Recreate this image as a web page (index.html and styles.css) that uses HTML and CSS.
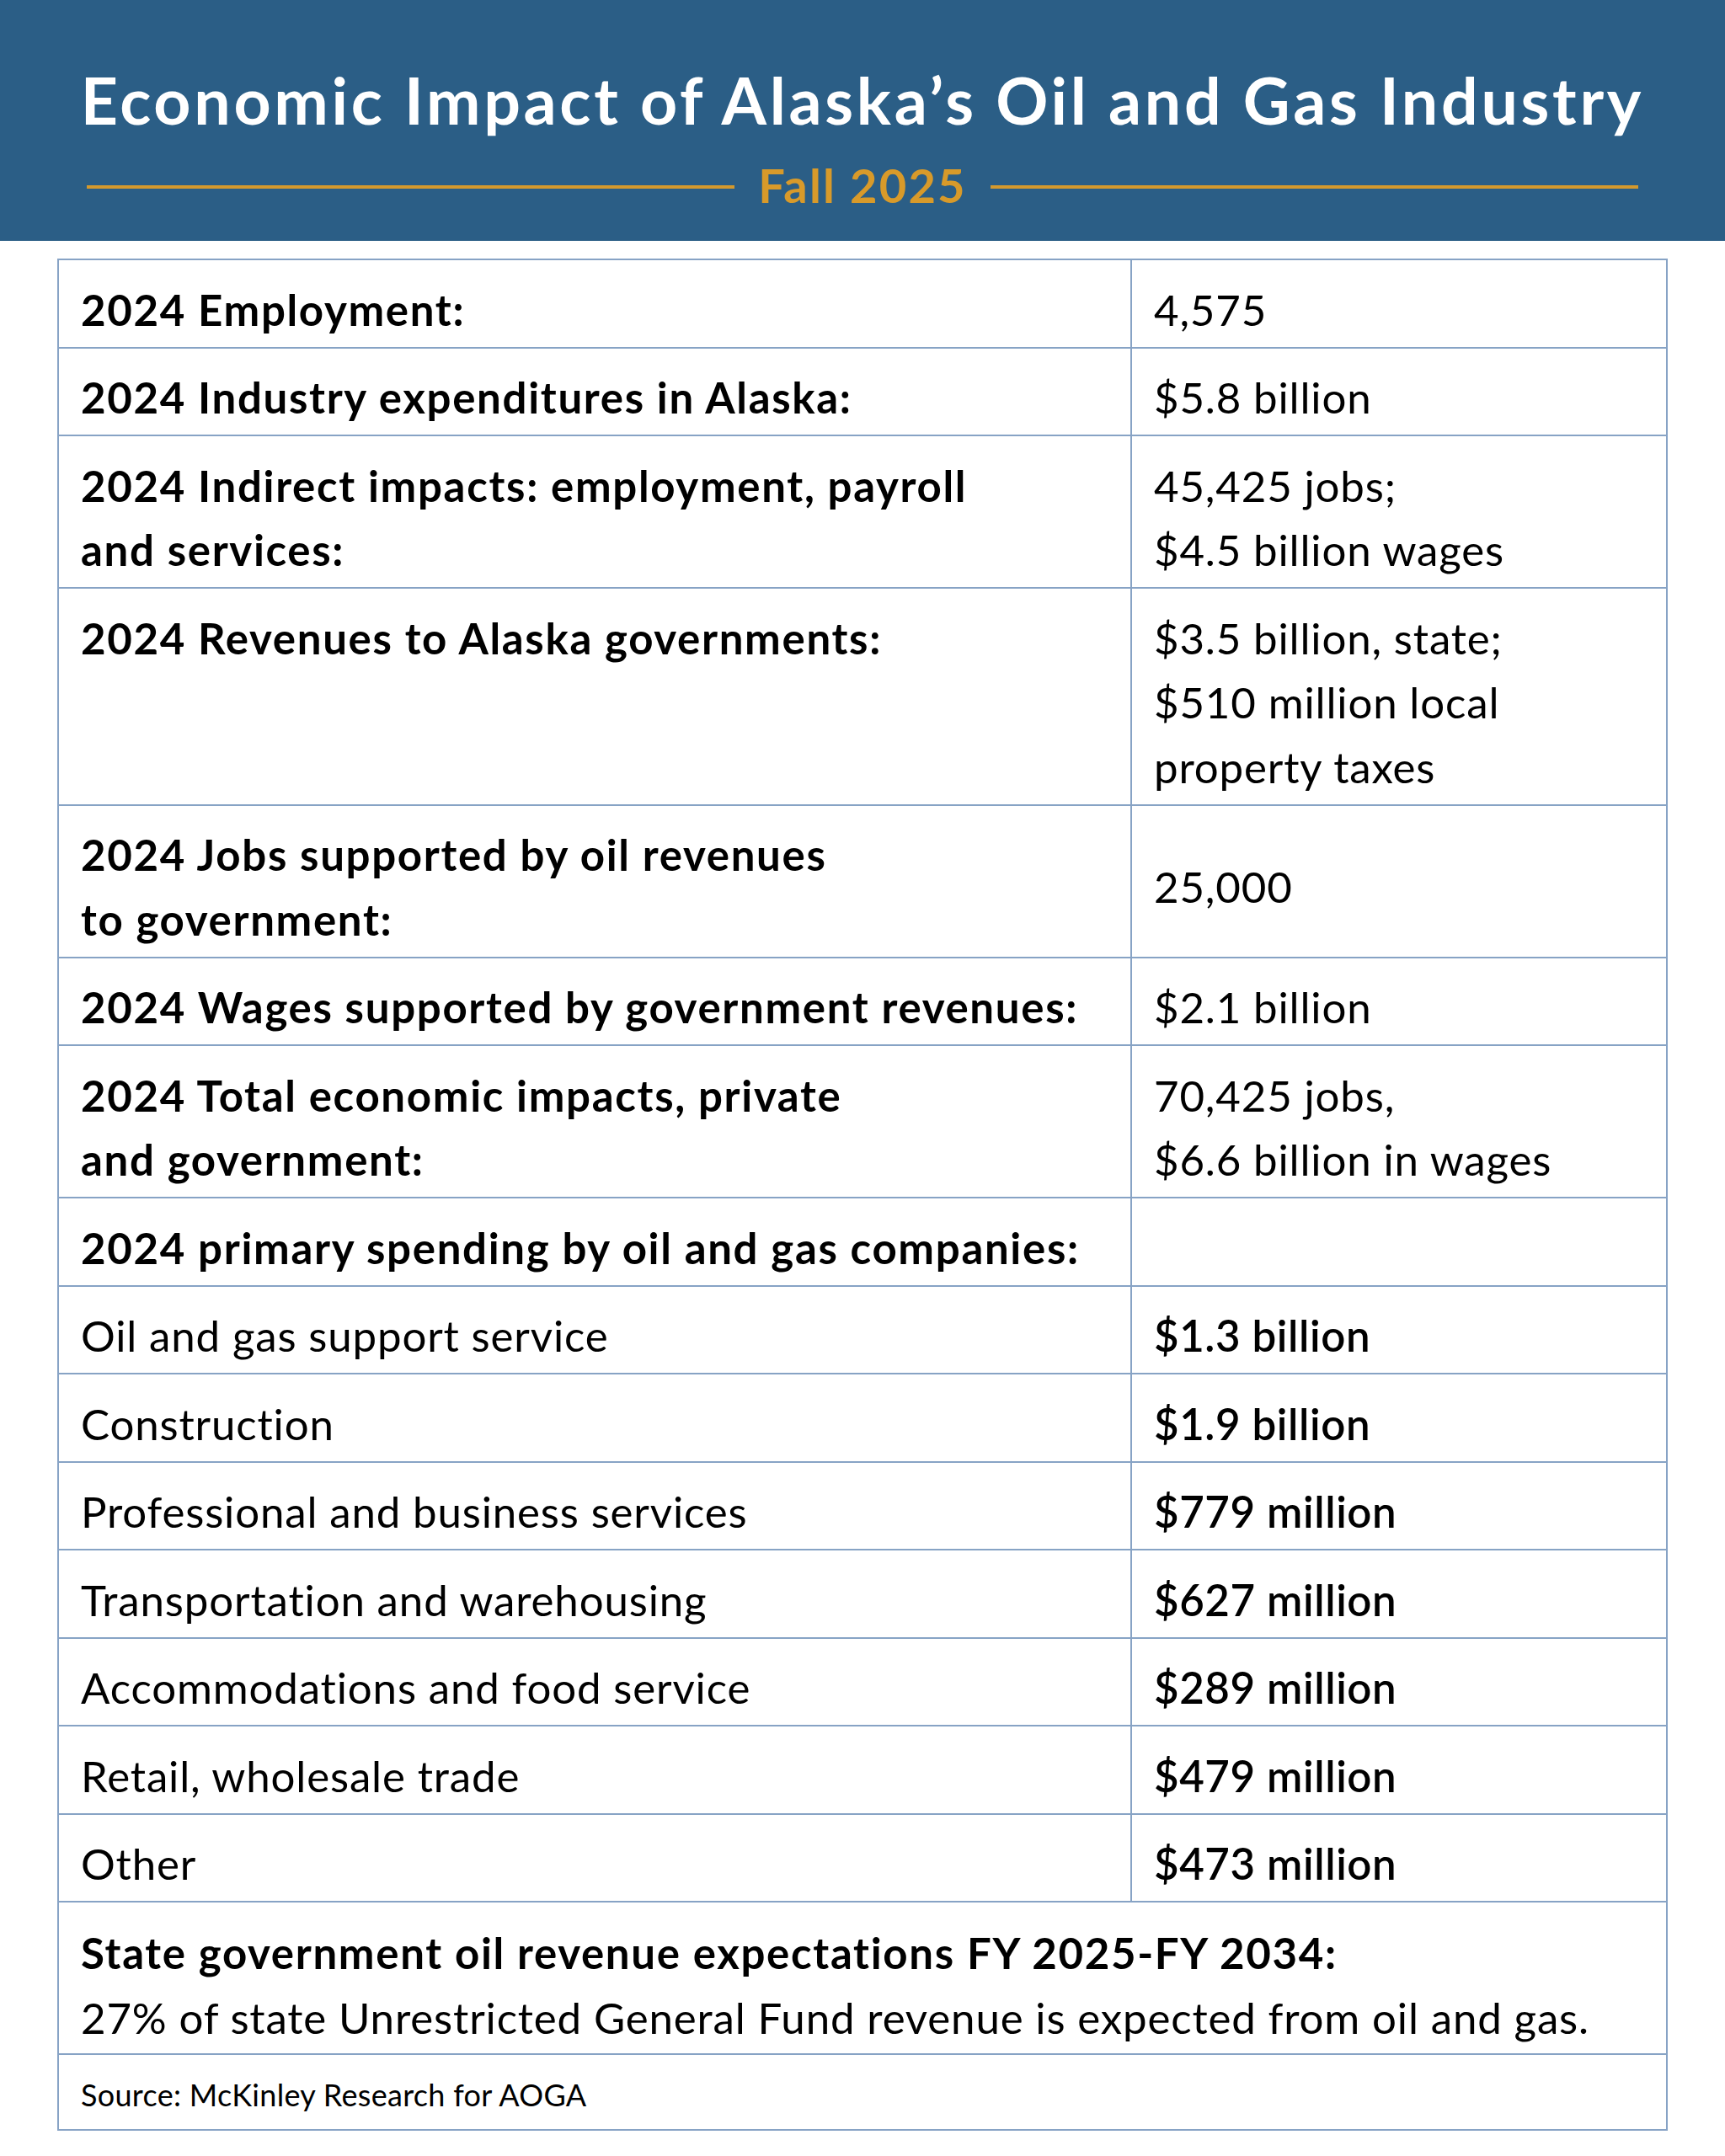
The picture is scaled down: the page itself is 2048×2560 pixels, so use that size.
FILE: index.html
```html
<!DOCTYPE html>
<html lang="en">
<head>
<meta charset="utf-8">
<title>Economic Impact of Alaska’s Oil and Gas Industry</title>
<link rel="stylesheet" href="styles.css">
</head>
<body>
<header class="banner">
  <h1 class="banner-title">Economic Impact of Alaska’s Oil and Gas Industry</h1>
  <div class="banner-sub">
    <span class="rule"></span>
    <span class="sub-text">Fall 2025</span>
    <span class="rule"></span>
  </div>
</header>
<main class="content">
  <table class="facts">
    <colgroup><col class="col-label"><col class="col-value"></colgroup>
    <tbody>
      <tr><th>2024 Employment:</th><td>4,575</td></tr>
      <tr><th>2024 Industry expenditures in Alaska:</th><td>$5.8 billion</td></tr>
      <tr><th>2024 Indirect impacts: employment, payroll<br>and services:</th><td>45,425 jobs;<br>$4.5 billion wages</td></tr>
      <tr><th>2024 Revenues to Alaska governments:</th><td>$3.5 billion, state;<br>$510 million local<br>property taxes</td></tr>
      <tr><th>2024 Jobs supported by oil revenues<br>to government:</th><td class="middle">25,000</td></tr>
      <tr><th>2024 Wages supported by government revenues:</th><td>$2.1 billion</td></tr>
      <tr><th>2024 Total economic impacts, private<br>and government:</th><td>70,425 jobs,<br>$6.6 billion in wages</td></tr>
      <tr><th>2024 primary spending by oil and gas companies:</th><td></td></tr>
      <tr class="spend"><td>Oil and gas support service</td><td class="amount">$1.3 billion</td></tr>
      <tr class="spend"><td>Construction</td><td class="amount">$1.9 billion</td></tr>
      <tr class="spend"><td>Professional and business services</td><td class="amount">$779 million</td></tr>
      <tr class="spend"><td>Transportation and warehousing</td><td class="amount">$627 million</td></tr>
      <tr class="spend"><td>Accommodations and food service</td><td class="amount">$289 million</td></tr>
      <tr class="spend"><td>Retail, wholesale trade</td><td class="amount">$479 million</td></tr>
      <tr class="spend"><td>Other</td><td class="amount">$473 million</td></tr>
      <tr><td colspan="2" class="outlook"><strong>State government oil revenue expectations FY 2025-FY 2034:</strong><br>27% of state Unrestricted General Fund revenue is expected from oil and gas.</td></tr>
      <tr><td colspan="2" class="source">Source: McKinley Research for AOGA</td></tr>
    </tbody>
  </table>
</main>
</body>
</html>
```

FILE: styles.css
```css
html, body {
  margin: 0;
  padding: 0;
  background: #ffffff;
}

body {
  font-family: "Lato", "Noto Sans", "DejaVu Sans", sans-serif;
  color: #000000;
}

.banner {
  background: #2b5e86;
  height: 286px;
  box-sizing: border-box;
  padding-top: 72px;
  display: flex;
  flex-direction: column;
}

.banner-title {
  margin: 0;
  color: #ffffff;
  font-size: 77px;
  line-height: 92px;
  font-weight: 700;
  letter-spacing: 3.7px;
  text-align: center;
}

.banner-sub {
  margin-top: 22px;
  padding: 0 103px;
  display: flex;
  align-items: center;
  gap: 28px;
}

.rule {
  flex: 1;
  height: 4px;
  margin-top: 4px;
  background: #d4992d;
}

.sub-text {
  color: #d89a2a;
  font-size: 56px;
  line-height: 67px;
  font-weight: 700;
  letter-spacing: 2.2px;
}

.content {
  padding: 21px 68px 30px;
}

.facts {
  width: 100%;
  border-collapse: collapse;
  table-layout: fixed;
  font-size: 51px;
  line-height: 76.5px;
  letter-spacing: 0.85px;
}

.col-label { width: 1274px; }
.col-value { width: auto; }

.facts th,
.facts td {
  border: 2px solid #87a3c5;
  padding: 20.5px 26px 5.5px;
  text-align: left;
  vertical-align: top;
}

.facts th {
  font-weight: 700;
  letter-spacing: 1.67px;
}

.facts td {
  font-weight: 400;
}

.facts td.middle {
  vertical-align: middle;
}

.facts td.amount {
  font-weight: 600;
  letter-spacing: 0.6px;
}

.facts td.outlook {
  padding-top: 22px;
  padding-bottom: 4px;
}

.facts td.outlook strong {
  font-weight: 700;
  letter-spacing: 1.67px;
}

.facts td.source {
  font-size: 36px;
  line-height: 50px;
  letter-spacing: 0.3px;
  padding-top: 22px;
  padding-bottom: 16px;
}
```
